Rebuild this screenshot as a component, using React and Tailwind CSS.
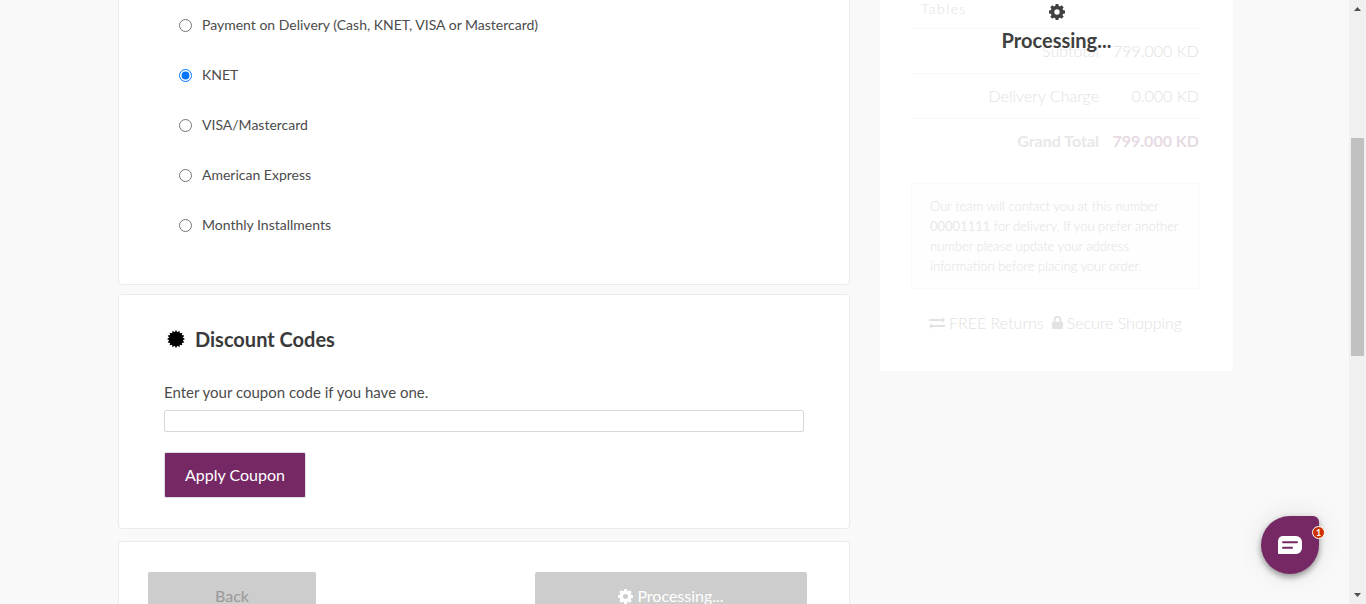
import React from "react";

const paymentMethods = [
  "Payment on Delivery (Cash, KNET, VISA or Mastercard)",
  "KNET",
  "VISA/Mastercard",
  "American Express",
  "Monthly Installments",
];

const totals = [
  { label: "Subtotal", value: "799.000 KD" },
  { label: "Delivery Charge", value: "0.000 KD" },
];

const burstPoints = Array.from({ length: 32 }, (_, i) => {
  const radius = i % 2 ? 7 : 9;
  const angle = (i * Math.PI) / 16;
  return `${(9 + radius * Math.sin(angle)).toFixed(2)},${(9 - radius * Math.cos(angle)).toFixed(2)}`;
}).join(" ");

function Burst() {
  return (
    <svg className="size-[18px]" viewBox="0 0 18 18" aria-hidden="true">
      <polygon points={burstPoints} fill="#000" />
    </svg>
  );
}

function Gear({ className }) {
  return (
    <svg className={className} viewBox="0 0 16 16" aria-hidden="true">
      <circle cx="8" cy="8" r="4.5" fill="none" stroke="currentColor" strokeWidth="3.6" />
      {[0, 45, 90, 135, 180, 225, 270, 315].map((a) => (
        <path key={a} d="M6.1 2.8 6.6 0h2.8l.5 2.8z" fill="currentColor" transform={`rotate(${a} 8 8)`} />
      ))}
    </svg>
  );
}

function Exchange() {
  return (
    <svg className="h-3 w-4" viewBox="0 0 16 12" fill="currentColor" aria-hidden="true">
      <path d="M0 2h13V0l3 3-3 3V4H0zM16 10H3v2L0 9l3-3v2h13z" />
    </svg>
  );
}

function Lock() {
  return (
    <svg className="h-[13px] w-[11px]" viewBox="0 0 11 13" aria-hidden="true">
      <path d="M2.6 7V3.7a2.9 2.9 0 0 1 5.8 0V7" fill="none" stroke="currentColor" strokeWidth="1.8" />
      <rect y="5.8" width="11" height="7.2" rx="0.8" fill="currentColor" />
    </svg>
  );
}

function PaymentCard() {
  return (
    <section className="rounded-b border border-t-0 border-[#ebebeb] bg-white pr-[45px] pb-[34px] pl-[60px]">
      {paymentMethods.map((name) => (
        <label key={name} className="flex h-[50px] items-center gap-2.5 text-sm">
          <input type="radio" name="payment" defaultChecked={name === "KNET"} className="m-0 size-[13px]" />
          {name}
        </label>
      ))}
    </section>
  );
}

function CouponCard() {
  return (
    <section className="mt-[9px] rounded border border-[#ebebeb] bg-white px-[45px] py-[30px]">
      <h2 className="flex items-center gap-2.5 pl-[3px] text-xl leading-7 font-bold text-[#3a3a3a]">
        <Burst />
        Discount Codes
      </h2>
      <label htmlFor="coupon" className="mt-[27px] block text-[15px] leading-6">
        Enter your coupon code if you have one.
      </label>
      <input id="coupon" type="text" className="mt-1.5 block h-[22px] w-full rounded-xs border border-[#d8d8d8] bg-white px-2 text-sm" />
      <button type="button" className="mt-5 block h-[46px] rounded-xs border border-[#ddd] bg-[#752864] px-5 text-base text-white">
        Apply Coupon
      </button>
    </section>
  );
}

function ActionsCard() {
  return (
    <section className="mt-3 flex justify-between rounded border border-[#ebebeb] bg-white py-[30px] pr-[42px] pl-[29px]">
      <button type="button" disabled className="h-12 w-[168px] rounded-xs bg-[#cdcdcd] text-base text-[#999]">
        Back
      </button>
      <button type="button" disabled className="flex h-12 w-[272px] items-center justify-center gap-1 rounded-xs bg-[#cdcdcd] text-base text-white">
        <Gear className="size-[15px]" />
        Processing...
      </button>
    </section>
  );
}

function Summary() {
  return (
    <aside className="relative bg-white pr-[33px] pb-9 pl-[31px] font-light text-[#e2e2e2]">
      <p className="h-7 pl-2.5 text-sm leading-[18px] tracking-widest">Tables</p>
      <table className="w-full text-right text-base">
        <tbody>
          {totals.map((row) => (
            <tr key={row.label} className="h-[45px] border-t border-[#f9f9f9]">
              <th scope="row" className="p-0 text-right font-light">{row.label}</th>
              <td className="w-[101px] p-0 pr-px whitespace-nowrap">{row.value}</td>
            </tr>
          ))}
          <tr className="h-[45px] border-t border-[#f9f9f9] font-bold">
            <th scope="row" className="p-0 text-right text-[#e8e8e8]">Grand Total</th>
            <td className="w-[101px] p-0 pr-px whitespace-nowrap text-[#e6dae3]">799.000 KD</td>
          </tr>
        </tbody>
      </table>
      <p className="mt-[19px] border border-[#fafafa] bg-[#fefefe] px-[18px] py-3 text-[13px] leading-5">
        Our team will contact you at this number <b className="text-[#e8e8e8]">00001111</b> for delivery. If you prefer another number please update your address information before placing your order.
      </p>
      <div className="mt-[22px] flex items-center justify-center gap-2 text-base leading-6">
        <span className="flex items-center gap-1"><Exchange />FREE Returns</span>
        <span className="flex items-center gap-1"><Lock />Secure Shopping</span>
      </div>
      <div className="absolute inset-x-0 top-1 flex flex-col items-center text-xl leading-6 font-bold text-[#404040]" role="status">
        <Gear className="mb-2 size-4" />
        Processing...
      </div>
    </aside>
  );
}

function ChatButton() {
  return (
    <button type="button" aria-label="Open chat, 1 new message" className="absolute right-[47px] bottom-[30px] flex size-[58px] items-center justify-center rounded-[29px] rounded-tr-md bg-[#752864] shadow-[0_3px_6px_rgba(0,0,0,0.4),0_0_28px_rgba(0,0,0,0.10)]">
      <svg className="h-[18px] w-6" viewBox="0 0 24 18" aria-hidden="true">
        <path d="M5 0h13a6 6 0 0 1 6 6v6a6 6 0 0 1-6 6H1a1 1 0 0 1-1-1V5a5 5 0 0 1 5-5z" fill="#fff" />
        <path d="M5 6.3h14M5 11.8h9" stroke="#752864" strokeWidth="2" strokeLinecap="round" />
      </svg>
      <span className="absolute top-2.5 -right-1.5 flex size-[13px] items-center justify-center rounded-full border border-white bg-[#cf3102] text-[9px] leading-none font-bold text-white">1</span>
    </button>
  );
}

function ScrollRail() {
  return (
    <div className="flex w-[17px] shrink-0 flex-col items-center justify-between bg-[#f0f0f0] py-[7px]" aria-hidden="true">
      <svg className="h-1 w-[7px]" viewBox="0 0 7 4"><path d="M0 4 3.5 0 7 4z" fill="#505050" /></svg>
      <div className="mt-[127px] mb-auto h-[218px] w-[13px] bg-[#c1c1c1]" />
      <svg className="h-1 w-[7px]" viewBox="0 0 7 4"><path d="M0 0h7L3.5 4z" fill="#505050" /></svg>
    </div>
  );
}

export default function App() {
  return (
    <div className="relative flex h-screen overflow-hidden bg-[#f9f9f9] font-['Lato',sans-serif] text-[#4c4c4c]">
      <main className="grid flex-1 grid-cols-[732fr_353fr] items-start gap-x-[30px] pr-[116px] pl-[118px]">
        <div>
          <PaymentCard />
          <CouponCard />
          <ActionsCard />
        </div>
        <Summary />
      </main>
      <ScrollRail />
      <ChatButton />
    </div>
  );
}
